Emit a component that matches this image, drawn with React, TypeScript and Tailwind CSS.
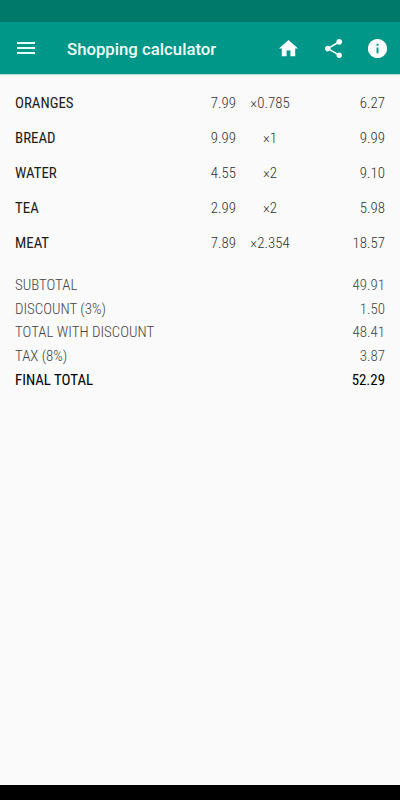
const items = [
  { name: 'ORANGES', price: '7.99', quantity: '×0.785', total: '6.27' },
  { name: 'BREAD', price: '9.99', quantity: '×1', total: '9.99' },
  { name: 'WATER', price: '4.55', quantity: '×2', total: '9.10' },
  { name: 'TEA', price: '2.99', quantity: '×2', total: '5.98' },
  { name: 'MEAT', price: '7.89', quantity: '×2.354', total: '18.57' },
];

const totals = [
  { label: 'SUBTOTAL', value: '49.91' },
  { label: 'DISCOUNT (3%)', value: '1.50' },
  { label: 'TOTAL WITH DISCOUNT', value: '48.41' },
  { label: 'TAX (8%)', value: '3.87' },
  { label: 'FINAL TOTAL', value: '52.29', strong: true },
];

function Icon({ path, className }: { path: string; className: string }) {
  return (
    <svg viewBox="0 0 24 24" fill="currentColor" className={className} aria-hidden="true">
      <path d={path} />
    </svg>
  );
}

export default function App() {
  return (
    <div className="flex h-[800px] w-[400px] flex-col overflow-hidden bg-[#fafafa] font-['Roboto',sans-serif]">
      <div className="h-[22px] shrink-0 bg-[#00796b]" />
      <header className="flex h-[52px] shrink-0 items-center bg-[#009688] pl-[14px] pr-[11px] text-white shadow-[0_1px_1px_rgba(0,150,136,0.25)]">
        <button aria-label="Menu" className="flex">
          <Icon className="size-6 text-[#e6fffb]" path="M3 18h18v-2H3v2zm0-5h18v-2H3v2zm0-7v2h18V6H3z" />
        </button>
        <h1 className="ml-[29px] flex-1 whitespace-nowrap pt-px text-[16.75px] font-medium leading-6 text-[#f0fffc]">Shopping calculator</h1>
        <nav className="flex items-center">
          <Icon className="mr-[22px] size-[23px]" path="M10 20v-6h4v6h5v-8h3L12 3 2 12h3v8z" />
          <Icon className="mr-[21px] size-[23px]" path="M18 16.08c-.76 0-1.44.3-1.96.77L8.91 12.7c.05-.23.09-.46.09-.7s-.04-.47-.09-.7l7.05-4.11c.54.5 1.25.81 2.04.81 1.66 0 3-1.34 3-3s-1.34-3-3-3-3 1.34-3 3c0 .24.04.47.09.7L8.04 9.81C7.5 9.31 6.79 9 6 9c-1.66 0-3 1.34-3 3s1.34 3 3 3c.79 0 1.5-.31 2.04-.81l7.12 4.16c-.05.21-.08.43-.08.65 0 1.61 1.31 2.92 2.92 2.92 1.61 0 2.92-1.31 2.92-2.92s-1.31-2.92-2.92-2.92z" />
          <Icon className="size-[23px]" path="M12 2C6.48 2 2 6.48 2 12s4.48 10 10 10 10-4.48 10-10S17.52 2 12 2zm1 15h-2v-6h2v6zm0-8h-2V7h2v2z" />
        </nav>
      </header>
      <main className="flex-1 px-[15px] pt-[12.25px] font-['Roboto_Condensed','Roboto',sans-serif] text-[14.9px] font-light [font-stretch:75%]">
        <div>
          {items.map((item) => (
            <div key={item.name} className="flex h-[34.8px] items-center text-[#333]">
              <span className="w-[160px] font-normal text-[#1c1c1c]">{item.name}</span>
              <span className="w-[61px] text-right">{item.price}</span>
              <span className="w-[68px] text-center">{item.quantity}</span>
              <span className="flex-1 text-right">{item.total}</span>
            </div>
          ))}
        </div>
        <div className="pt-[13px]">
          {totals.map((row) => (
            <div
              key={row.label}
              className={`flex h-[23.75px] items-center justify-between ${row.strong ? 'font-normal text-black' : 'text-[#444]'}`}
            >
              <span>{row.label}</span>
              <span>{row.value}</span>
            </div>
          ))}
        </div>
      </main>
      <div className="h-[15px] shrink-0 bg-black" />
    </div>
  );
}
